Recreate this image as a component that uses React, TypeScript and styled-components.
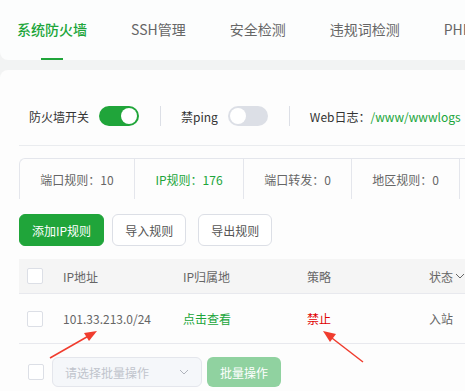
import React from "react";
import styled, { createGlobalStyle } from "styled-components";

const Global = createGlobalStyle`
  html, body { margin: 0; padding: 0; }
  body {
    background: #f2f3f3;
    font-family: "Noto Sans CJK SC", "Noto Sans", sans-serif;
    width: 465px;
    height: 391px;
    overflow: hidden;
  }
`;

const Page = styled.div`
  position: relative;
  width: 465px;
  height: 391px;
  overflow: hidden;
`;

const TopBar = styled.div`
  height: 60px;
  background: #fcfdfd;
  border-bottom-left-radius: 8px;
  display: flex;
  padding-left: 17px;
  gap: 44px;
  white-space: nowrap;
`;

const Tab = styled.div<{ $active?: boolean }>`
  position: relative;
  height: 60px;
  display: flex;
  align-items: center;
  padding-bottom: 3px;
  box-sizing: border-box;
  font-size: 14px;
  color: ${(p) => (p.$active ? "#20a53a" : "#666")};
  font-weight: ${(p) => (p.$active ? 500 : 400)};
  &::after {
    content: "";
    display: ${(p) => (p.$active ? "block" : "none")};
    position: absolute;
    left: 50%;
    transform: translateX(-50%);
    bottom: 0;
    width: 22px;
    height: 2px;
    background: #20a53a;
  }
`;

const Card = styled.div`
  margin-top: 10px;
  background: #fdfdfd;
  border-top-left-radius: 8px;
  height: 330px;
  padding: 36px 0 0 19px;
  box-sizing: border-box;
`;

const SwitchRow = styled.div`
  display: flex;
  align-items: center;
  height: 20px;
  padding-left: 10px;
  font-size: 12px;
  color: #333;
  white-space: nowrap;
`;

const Label = styled.span`
  margin-right: 10px;
`;

const Toggle = styled.span<{ $on?: boolean }>`
  position: relative;
  display: inline-block;
  width: 40px;
  height: 20px;
  border-radius: 10px;
  background: ${(p) => (p.$on ? "#20a53a" : "#dcdfe6")};
  &::after {
    content: "";
    position: absolute;
    top: 2px;
    left: ${(p) => (p.$on ? "22px" : "2px")};
    width: 16px;
    height: 16px;
    border-radius: 50%;
    background: #fff;
  }
`;

const Divider = styled.span`
  display: inline-block;
  width: 1px;
  height: 20px;
  background: #dcdfe6;
  margin: 0 20px 0 21px;
`;

const LinkText = styled.span`
  color: #20a53a;
`;

const HLine = styled.div`
  margin-top: 19px;
  height: 1px;
  background: #eaecef;
`;

const StatsBox = styled.div`
  margin-top: 12px;
  display: flex;
  height: 40px;
  border: 1px solid #e4e6ec;
  border-bottom: none;
  border-right: none;
  border-top-left-radius: 6px;
  white-space: nowrap;
`;

const Stat = styled.div<{ $active?: boolean; $w: number }>`
  flex: none;
  width: ${(p) => p.$w}px;
  box-sizing: border-box;
  border-right: 1px solid #e4e6ec;
  display: flex;
  align-items: center;
  justify-content: center;
  font-size: 12px;
  color: ${(p) => (p.$active ? "#20a53a" : "#666")};
`;

const BtnRow = styled.div`
  margin-top: 15px;
  display: flex;
  align-items: center;
`;

const Button = styled.button<{ $primary?: boolean; $ml?: number }>`
  height: 32px;
  padding: 0 12px;
  margin-left: ${(p) => p.$ml ?? 0}px;
  border-radius: 6px;
  font-family: inherit;
  font-size: 12px;
  border: 1px solid ${(p) => (p.$primary ? "#20a53a" : "#dcdfe6")};
  background: ${(p) => (p.$primary ? "#20a53a" : "#fff")};
  color: ${(p) => (p.$primary ? "#fff" : "#555")};
  box-sizing: border-box;
  cursor: pointer;
`;

const Grid = styled.div<{ $head?: boolean }>`
  display: grid;
  grid-template-columns: 36px 120px 124px 122px 1fr;
  align-items: center;
  height: ${(p) => (p.$head ? 35 : 50)}px;
  background: ${(p) => (p.$head ? "#f5f5f5" : "transparent")};
  border-bottom: 1px solid #e8e9ee;
  box-sizing: border-box;
  font-size: 12px;
  color: #666;
  white-space: nowrap;
`;

const Table = styled.div`
  margin-top: 13px;
`;

const Cell = styled.div<{ $color?: string }>`
  padding-left: 8px;
  color: ${(p) => p.$color ?? "#666"};
  display: flex;
  align-items: center;
  gap: 2px;
`;

const Check = styled.span`
  display: block;
  width: 16px;
  height: 16px;
  margin-left: 8px;
  box-sizing: border-box;
  border: 1px solid #dcdfe6;
  border-radius: 2px;
  background: #fff;
`;

const Footer = styled.div`
  margin-top: 13px;
  display: flex;
  align-items: center;
  padding-left: 9px;
`;

const FootCheck = styled(Check)`
  margin-left: 0;
  margin-right: 8px;
`;

const Select = styled.div`
  width: 150px;
  height: 30px;
  box-sizing: border-box;
  border: 1px solid #e4e6ec;
  border-radius: 6px;
  background: #f5f7fa;
  display: flex;
  align-items: center;
  justify-content: space-between;
  padding: 0 12px;
  font-size: 12px;
  color: #c0c4cc;
  white-space: nowrap;
`;

const BatchBtn = styled.button`
  margin-left: 5px;
  height: 30px;
  width: 74px;
  border: none;
  border-radius: 6px;
  background: #90d2a0;
  color: #fff;
  font-family: inherit;
  font-size: 12px;
`;

const Arrows = styled.svg`
  position: absolute;
  left: 0;
  top: 0;
  pointer-events: none;
`;

const Chevron = ({ color = "#666", size = 10 }: { color?: string; size?: number }) => (
  <svg width={size} height={size} viewBox="0 0 10 10">
    <path d="M1 3 L5 7 L9 3" fill="none" stroke={color} strokeWidth="1" />
  </svg>
);

export default function App() {
  return (
    <Page>
      <Global />
      <TopBar>
        <Tab $active>系统防火墙</Tab>
        <Tab>SSH管理</Tab>
        <Tab>安全检测</Tab>
        <Tab>违规词检测</Tab>
        <Tab>PHP网站安全</Tab>
      </TopBar>
      <Card>
        <SwitchRow>
          <Label>防火墙开关</Label>
          <Toggle $on />
          <Divider />
          <Label>禁ping</Label>
          <Toggle />
          <Divider />
          <span>
            Web日志：<LinkText>/www/wwwlogs</LinkText>
          </span>
        </SwitchRow>
        <HLine />
        <StatsBox>
          <Stat $w={115}>端口规则：10</Stat>
          <Stat $w={109} $active>
            IP规则：176
          </Stat>
          <Stat $w={108}>端口转发：0</Stat>
          <Stat $w={108}>地区规则：0</Stat>
          <Stat $w={108}>&nbsp;</Stat>
        </StatsBox>
        <BtnRow>
          <Button $primary>添加IP规则</Button>
          <Button $ml={8}>导入规则</Button>
          <Button $ml={12}>导出规则</Button>
        </BtnRow>
        <Table>
          <Grid $head>
            <Check />
            <Cell>IP地址</Cell>
            <Cell>IP归属地</Cell>
            <Cell>策略</Cell>
            <Cell>
              状态
              <Chevron />
            </Cell>
          </Grid>
          <Grid>
            <Check />
            <Cell>101.33.213.0/24</Cell>
            <Cell $color="#20a53a">点击查看</Cell>
            <Cell $color="#e00000">禁止</Cell>
            <Cell>入站</Cell>
          </Grid>
        </Table>
        <Footer>
          <FootCheck />
          <Select>
            请选择批量操作
            <Chevron color="#b0b4bc" />
          </Select>
          <BatchBtn>批量操作</BatchBtn>
        </Footer>
      </Card>
      <Arrows width="465" height="391" viewBox="0 0 465 391">
        <line x1="50" y1="358" x2="92" y2="334" stroke="#f03c2e" strokeWidth="1.5" />
        <polygon points="97,331 84,333 89,341" fill="#f03c2e" />
        <line x1="363" y1="362" x2="328" y2="335" stroke="#f03c2e" strokeWidth="1.5" />
        <polygon points="323,331 336,334 330,342" fill="#f03c2e" />
      </Arrows>
    </Page>
  );
}
